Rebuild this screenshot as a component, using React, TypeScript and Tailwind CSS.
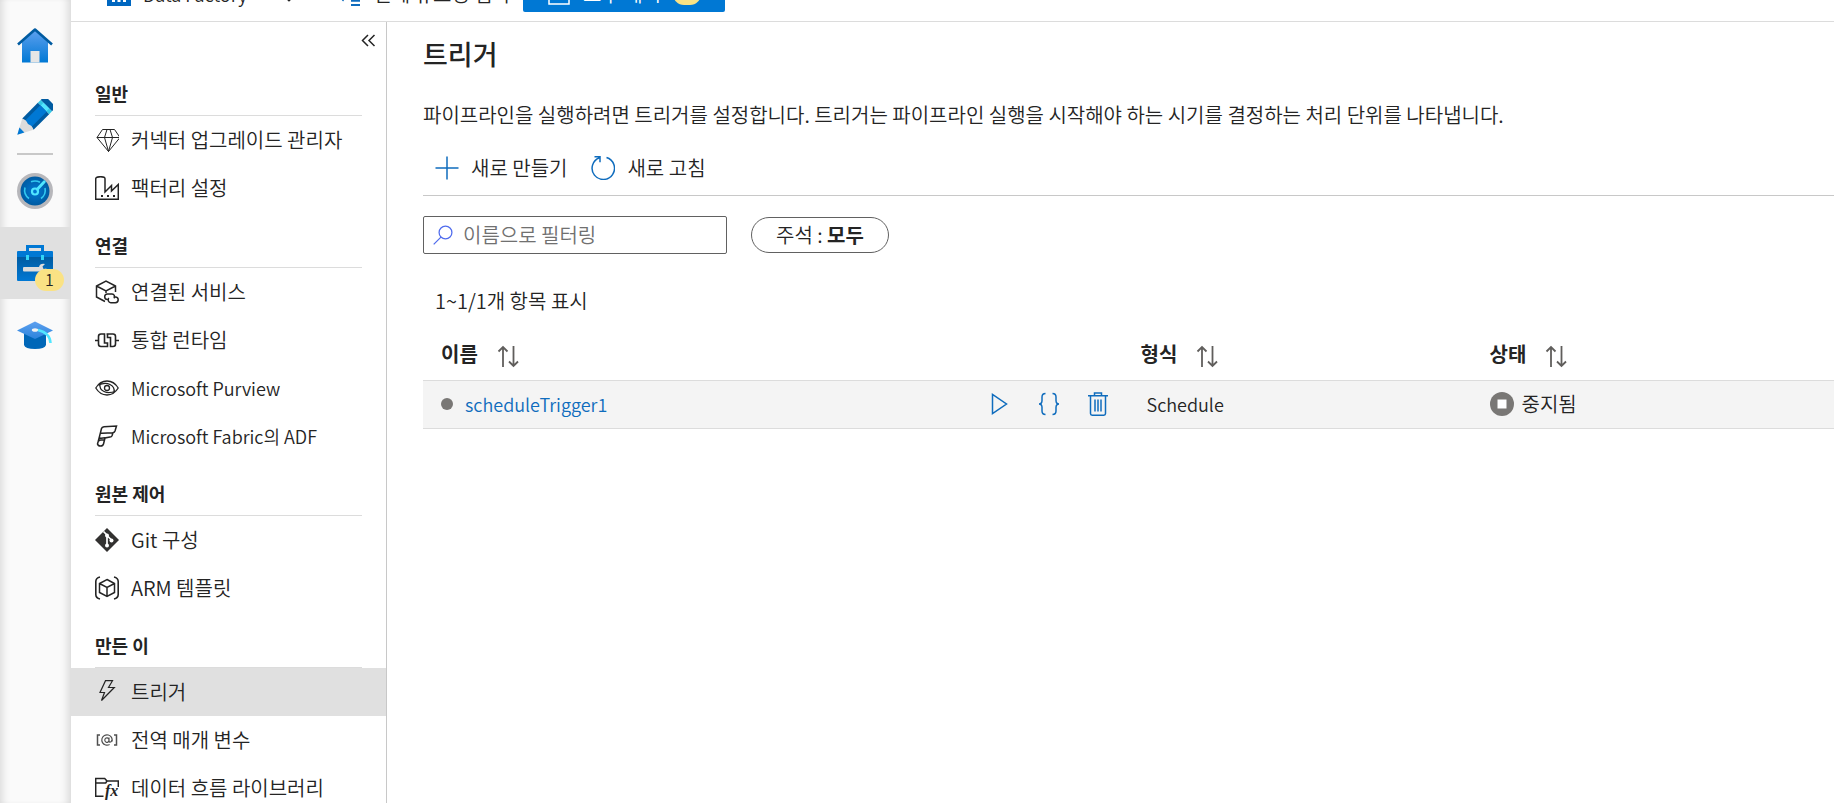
import type { ReactNode } from 'react'

type IconProps = { children: ReactNode; box?: string; className?: string }

const Svg = ({ children, box = '0 0 24 24', className = 'size-6' }: IconProps) => (
  <svg
    viewBox={box}
    className={`${className} shrink-0`}
    fill="none"
    stroke="currentColor"
    strokeWidth="1.5"
    aria-hidden="true"
  >
    {children}
  </svg>
)

/* ---------- left rail icons ---------- */

const HomeIcon = () => (
  <Svg box="0 0 36 36" className="size-9">
    <defs>
      <linearGradient id="home" x1="0" y1="0" x2="0" y2="1">
        <stop offset="0" stopColor="#5ea0ef" />
        <stop offset="1" stopColor="#0078d4" />
      </linearGradient>
    </defs>
    <path d="M18 3 31 15v20.500H5V15z" fill="url(#home)" stroke="none" />
    <path d="M13.500 24h9v11.500h-9z" fill="#e6e6e6" stroke="none" />
    <path d="m1 17.500 17-15 17 15" stroke="#005ba1" strokeWidth="2.600" strokeLinejoin="round" />
  </Svg>
)

const PencilIcon = () => (
  <Svg box="0 0 36 36" className="size-9">
    <g transform="rotate(45 18 18)" stroke="none">
      <path d="M10 2V0q0-4 4-4h8q4 0 4 4v2z" fill="#005ba1" />
      <path d="M10 2h16v4H10z" fill="#32c8e6" />
      <path d="M14 2h8v4h-8z" fill="#50e6ff" />
      <path d="M10 6h16v22H10z" fill="#005ba1" />
      <path d="M13.500 6h9v22h-9z" fill="#0078d4" />
      <path d="M10 28q4-2 8 0 4-2 8 0l-8 15z" fill="#dcdcdc" />
      <path d="M14.500 36.500h7L18 43z" fill="#0078d4" />
    </g>
  </Svg>
)

const GaugeIcon = () => (
  <Svg box="0 0 36 36" className="size-9">
    <defs>
      <radialGradient id="gauge">
        <stop offset="0" stopColor="#0078d4" />
        <stop offset="1" stopColor="#005ba1" />
      </radialGradient>
    </defs>
    <circle cx="18" cy="18" r="18" fill="#b7b7bb" stroke="none" />
    <circle cx="18" cy="18" r="14.500" fill="url(#gauge)" stroke="none" />
    <path d="M12 25.500a10.500 10.500 0 0 1-4-11M14 8.800a10.500 10.500 0 0 1 9 .5M28 15a10.500 10.500 0 0 1-4 10.500" stroke="#32c8f0" strokeWidth="1.600" />
    <circle cx="18" cy="18.500" r="3" stroke="#50e6ff" strokeWidth="2.200" />
    <path d="m20.300 16.200 7-7.500" stroke="#50e6ff" strokeWidth="2.800" strokeLinecap="round" />
  </Svg>
)

const ToolboxIcon = () => (
  <Svg box="0 0 36 36" className="size-9">
    <defs>
      <linearGradient id="toolbox" x1="0" y1="0" x2="0" y2="1">
        <stop offset="0" stopColor="#005ba1" />
        <stop offset="1" stopColor="#0078d4" />
      </linearGradient>
    </defs>
    <path d="M10.500 7V1.500h15V7" stroke="#0078d4" strokeWidth="3" />
    <path d="M0 7q0-1 1-1h34q1 0 1 1v5H0z" fill="#0078d4" stroke="none" />
    <path d="M0 12h36v23q0 1-1 1H1q-1 0-1-1z" fill="url(#toolbox)" stroke="none" />
    <path d="M10.500 10v5M25.500 10v5" stroke="#32d4f5" strokeWidth="3" />
    <path d="M7 22h15q1-4 6-3l-2.500 2.500 1 2.500 3-.5q-1 3-4 3H7q-1 0-1-1v-2.500q0-1 1-1z" fill="#dcdcdc" stroke="none" />
  </Svg>
)

const LearnIcon = () => (
  <Svg box="0 0 36 36" className="size-9">
    <defs>
      <linearGradient id="learn" x1="0" y1="0" x2="0" y2="1">
        <stop offset="0" stopColor="#5ea0ef" />
        <stop offset="1" stopColor="#2b84dc" />
      </linearGradient>
    </defs>
    <path d="M7 16h22v12q-1 4-11 4T7 28z" fill="#0067b8" stroke="none" />
    <path d="m0 13.500 18-9 18 9-18 8.500z" fill="url(#learn)" stroke="none" />
    <ellipse cx="18" cy="13" rx="3.200" ry="1.800" fill="#f2f2f2" stroke="none" />
    <path d="M21 13q12 3 12.500 13" stroke="#50e6ff" strokeWidth="2.600" />
  </Svg>
)

const rail = [
  { name: '홈', icon: <HomeIcon /> },
  { name: '작성자', icon: <PencilIcon />, divider: true },
  { name: '모니터', icon: <GaugeIcon /> },
  { name: '관리', icon: <ToolboxIcon />, badge: 1 },
  { name: '학습 센터', icon: <LearnIcon /> },
]

/* ---------- management menu ---------- */

const menu = [
  {
    title: '일반',
    items: [
      {
        label: '커넥터 업그레이드 관리자',
        icon: (
          <Svg>
            <path strokeWidth="1" d="M7.500 1.500h12L25 9.500 13.500 23.500 2 9.500zM2 9.500h23M12 1.500 9.500 9.500l4 14 4-14L15 1.500" />
          </Svg>
        ),
      },
      {
        label: '팩터리 설정',
        icon: (
          <Svg>
            <path d="M.7 23.300V3Q.7.700 5.500.700T10 3v13l6.500-6.500V15l6.800-6.500v14.800z" />
            <path d="M6 20h2M12 20h2M18 20h2" strokeWidth="2" />
          </Svg>
        ),
      },
    ],
  },
  {
    title: '연결',
    items: [
      {
        label: '연결된 서비스',
        icon: (
          <Svg>
            <path d="M10 21.500 1.500 17V6L11 1l9.500 5v6M1.500 6l9.500 5 9.500-5M11 11v2" />
            <path d="M14 19.500h-1.500a2.800 2.800 0 0 1 0-5.600H17a2.800 2.800 0 0 1 2 4.500M18.500 16.900h1.800a2.900 2.900 0 0 1 0 5.800h-4.500a2.900 2.900 0 0 1-2-4.700" />
          </Svg>
        ),
      },
      {
        label: '통합 런타임',
        icon: (
          <Svg>
            <path
              strokeWidth="1.600"
              d="M0 12.500h3.500M20.500 12.500H24M9.500 6H6Q3.500 6 3.500 8.500v7.500Q3.500 18.500 6 18.500h6.500V15h-3V6zM11.500 6H18q2.500 0 2.500 2.500v7.500q0 2.500-2.500 2.500h-2.500v-9h-3V6"
            />
          </Svg>
        ),
      },
      {
        label: 'Microsoft Purview',
        latin: true,
        icon: (
          <Svg>
            <path
              strokeWidth="1.300"
              d="M.8 12Q5 5 12 5t11.200 7Q19 19 12 19T.8 12zM3.500 9Q10 6 15 8.500T19 16M20.500 15Q14 18 9 15.500T5 8"
            />
            <circle cx="12" cy="12" r="2.500" strokeWidth="1.300" />
          </Svg>
        ),
      },
      {
        label: 'Microsoft Fabric의 ADF',
        latin: true,
        icon: (
          <Svg>
            <path d="M6.500 4.500q.5-1.500 2.500-1.800L21.500 2 20 7q-.5 1.500-2 1.700l-1 3q-.5 1.200-2 1.400l-5 .9-1.500 6q-.5 2-3 2t-3-2l2-7.500zM5.500 8.500Q5 9.500 7 9.200L18 8.700M4.500 13q0 1.500 1.500 1.300l4-.5M2.800 18q1-2 3-2h3" />
          </Svg>
        ),
      },
    ],
  },
  {
    title: '원본 제어',
    items: [
      {
        label: 'Git 구성',
        icon: (
          <Svg>
            <path d="M12 0 24 12 12 24 0 12z" fill="#323130" stroke="none" />
            <path d="m8.500 3.500 3.500 3.500v10.500M12 7.500l4.500 4.500" stroke="#fff" strokeWidth="1.700" />
            <g fill="#fff" stroke="none">
              <circle cx="12" cy="7.500" r="2" />
              <circle cx="12" cy="17.500" r="2" />
              <circle cx="16.500" cy="12.500" r="2" />
            </g>
          </Svg>
        ),
      },
      {
        label: 'ARM 템플릿',
        icon: (
          <Svg>
            <path d="M5 1Q.8 2 .8 5.500v13Q.8 22 5 23M19 1q4.200 1 4.200 4.500v13Q23.200 22 19 23" strokeWidth="1.600" />
            <path d="m12 3.500 7.500 4v9L12 20.500l-7.500-4v-9zM4.500 7.500l7.500 4 7.500-4M12 11.500v9" />
          </Svg>
        ),
      },
    ],
  },
  {
    title: '만든 이',
    items: [
      {
        label: '트리거',
        active: true,
        icon: (
          <Svg>
            <path strokeWidth="1.200" d="M10.500.700h7L13.500 7.500h5.800L6.500 20.500 9.500 12.500H5z" />
          </Svg>
        ),
      },
      {
        label: '전역 매개 변수',
        icon: (
          <Svg className="size-6 text-[#505050]">
            <path d="M5 7H2.500v10H5M19 7h2.500v10H19" />
            <circle cx="12" cy="12" r="5.200" strokeWidth="1.200" strokeDasharray="28 5" transform="rotate(60 12 12)" />
            <path d="M14 9.500v3.500q.5 1.800 2 .8 1-1 1-2M14 12a2.100 2.300 0 1 1-.1-.6" strokeWidth="1.200" />
          </Svg>
        ),
      },
      {
        label: '데이터 흐름 라이브러리',
        icon: (
          <Svg>
            <path d="M8.500 20.300H.7V2.500h9L12 5h11.300v6M.7 7h10L12 5" />
            <text x="10" y="20" fontSize="16" fontStyle="italic" fontWeight="bold" fontFamily="Liberation Serif, serif" fill="currentColor" stroke="none">
              fx
            </text>
          </Svg>
        ),
      },
    ],
  },
]

const SortIcon = () => (
  <Svg className="mt-1 size-6 text-[#605e5c]">
    <path strokeWidth="1.800" d="M7 23V3M2.500 7.500 7 3l4.500 4.500M17.500 2v20M13 17.500l4.500 4.500 4.500-4.500" />
  </Svg>
)

const columns = [
  { name: '이름', className: 'w-1/2 pl-[18px]' },
  { name: '형식', className: 'w-[349px] pl-3' },
  { name: '상태', className: 'pl-3' },
]

const TopBar = () => (
  <header className="flex h-[22px] shrink-0 items-end overflow-hidden border-b border-[#dcdcdc] pb-[9px] pl-9">
    <div className="flex h-9 items-center whitespace-nowrap">
      <Svg>
        <path d="M0 0h24v24H0z" fill="#0067c0" stroke="none" />
        <path d="M5 20v-9h3v9zM10.500 20v-6h3v6zM16 20V9h3v11z" fill="#fff" stroke="none" />
      </Svg>
      <span className="ml-3 text-[18px]">Data Factory</span>
      <Svg className="ml-8 size-5">
        <path strokeWidth="2" d="m4 12 8 8 8-8" />
      </Svg>
      <button type="button" className="ml-[38px] flex items-center gap-3">
        <Svg className="size-6 text-[#0f6cbd]">
          <path strokeWidth="1.800" d="m2 14 4 4L13 8M14 14.500h9M14 18.800h9M14 23h9" />
        </Svg>
        전체 유효성 검사
      </button>
      <button type="button" className="ml-3 flex h-9 items-center gap-3 rounded-xs bg-[#0078d4] px-6 text-white">
        <Svg>
          <path d="M2 2h20v20H2zM6 2v6h12V2" />
        </Svg>
        모두 게시
        <span className="h-[22px] w-7 rounded-full bg-[#fae284] text-center text-[16px] leading-4 text-[#242424]">1</span>
      </button>
    </div>
  </header>
)

const Rail = () => (
  <nav className="w-[71px] shrink-0 border-r border-[#e0e0e0] bg-[#fafafa] pt-[9px] shadow-[inset_8px_0_8px_-6px_#00000024,inset_-8px_0_8px_-6px_#00000024]">
    {rail.map(({ name, icon, badge, divider }) => (
      <div key={name}>
        <button
          type="button"
          aria-label={name}
          className={`relative flex h-[72px] w-full items-center justify-center ${badge ? 'bg-[#e0e0e0]' : ''}`}
        >
          {icon}
          {badge && (
            <span className="absolute right-[6px] bottom-2 h-[22px] w-[29px] rounded-full bg-[#fae284] text-center text-[16px] leading-5">
              {badge}
            </span>
          )}
        </button>
        {divider && <hr className="mx-auto w-9 border-t-2 border-[#c8c8c8]" />}
      </div>
    ))}
  </nav>
)

const SideMenu = () => (
  <aside className="w-[316px] shrink-0 border-r border-[#c8c8c8]">
    <div className="flex h-[38px] items-center justify-end pr-[10px]">
      <button type="button" aria-label="축소">
        <Svg box="0 0 16 16" className="size-4">
          <path d="M8 2 2.500 7.500 8 13M14.500 2 9 7.500l5.500 5.500" />
        </Svg>
      </button>
    </div>
    {menu.map((group) => (
      <section key={group.title}>
        <h2 className="mx-6 flex h-14 items-end border-b border-[#dcdcdc] pb-2 text-[18px] leading-[27px] font-bold">
          {group.title}
        </h2>
        {group.items.map((item) => (
          <a
            key={item.label}
            href="#"
            className={`flex h-12 items-center gap-3 pl-6 ${'active' in item ? 'bg-[#e0e0e0]' : ''} ${'latin' in item ? 'text-[18px]' : ''}`}
          >
            {item.icon}
            {item.label}
          </a>
        ))}
      </section>
    ))}
  </aside>
)

const Triggers = () => (
  <main className="min-w-0 flex-1 pt-[14px] pl-9">
    <h1 className="text-[27px] leading-9 font-medium">트리거</h1>
    <p className="mt-7">
      파이프라인을 실행하려면 트리거를 설정합니다. 트리거는 파이프라인 실행을 시작해야 하는 시기를 결정하는 처리 단위를
      나타냅니다.
    </p>

    <div className="mt-[11px] flex h-[55px] items-center gap-6 border-b border-[#c8c8c8] pl-3">
      <button type="button" className="flex items-center gap-3">
        <Svg className="size-6 text-[#0f6cbd]">
          <path d="M12 .5v23M.5 12h23" />
        </Svg>
        새로 만들기
      </button>
      <button type="button" className="flex items-center gap-3">
        <Svg className="size-6 text-[#0f6cbd]">
          <path d="M15.500 1.500A11.200 11.200 0 1 1 8.500 1.700M3.500.7h5.500v5.500" />
        </Svg>
        새로 고침
      </button>
    </div>

    <div className="mt-5 flex items-center gap-6">
      <label className="flex h-[38px] w-[304px] items-center gap-2.5 rounded-xs border border-[#616161] pl-[9px]">
        <Svg className="size-5 text-[#4f6bed]">
          <circle cx="15" cy="9" r="7.700" />
          <path d="M9.500 14.500.800 23.200" />
        </Svg>
        <input
          type="text"
          aria-label="이름으로 필터링"
          placeholder="이름으로 필터링"
          className="w-full min-w-0 outline-none placeholder:text-[#707070]"
        />
      </label>
      <button type="button" className="h-9 rounded-full border border-[#616161] px-6">
        주석 : <b className="font-bold">모두</b>
      </button>
    </div>

    <p className="mt-8 pl-3">1~1/1개 항목 표시</p>

    <table className="mt-3 w-full table-fixed border-collapse text-left">
      <thead>
        <tr className="h-[52px]">
          {columns.map((col) => (
            <th key={col.name} className={`p-0 font-bold ${col.className}`}>
              <button type="button" className="flex items-center gap-[18px]">
                {col.name}
                <SortIcon />
              </button>
            </th>
          ))}
        </tr>
      </thead>
      <tbody>
        <tr className="h-12 border-y border-[#dcdcdc] bg-[#f4f4f4]">
          <td className="pl-[18px]">
            <div className="flex items-center">
              <span className="size-3 rounded-full bg-[#797775]" />
              <a href="#" className="ml-3 text-[18px] text-[#0f6cbd]">
                scheduleTrigger1
              </a>
              <div className="ml-auto flex gap-[25px] pr-[19px] text-[#0f6cbd]">
                <button type="button" aria-label="시작">
                  <Svg>
                    <path d="M4.500 2.500v19L18.500 12z" />
                  </Svg>
                </button>
                <button type="button" aria-label="코드">
                  <Svg>
                    <path d="M8.500 1.500Q5 1.500 5 5v3.500Q5 12 2 12q3 0 3 3.500V19q0 3.500 3.500 3.500M15.500 1.500Q19 1.500 19 5v3.500q0 3.500 3 3.500-3 0-3 3.500V19q0 3.500-3.500 3.500" />
                  </Svg>
                </button>
                <button type="button" aria-label="삭제">
                  <Svg>
                    <path d="M2 3.800h20M8.500 3.500V1h7v2.500M4.500 4v17.500q0 1.700 1.700 1.700h11.600q1.700 0 1.700-1.700V4M9 7.500v12M12 7.500v12M15 7.500v12" />
                  </Svg>
                </button>
              </div>
            </div>
          </td>
          <td className="pl-[18px] text-[18px]">Schedule</td>
          <td className="pl-3">
            <div className="flex items-center gap-2">
              <Svg>
                <circle cx="12" cy="12" r="12" fill="#797775" stroke="none" />
                <path d="M7.500 7.500h9v9h-9z" fill="#fff" stroke="none" />
              </Svg>
              중지됨
            </div>
          </td>
        </tr>
      </tbody>
    </table>
  </main>
)

export default function App() {
  return (
    <div className="flex h-screen overflow-hidden bg-white font-['Noto_Sans_CJK_KR',sans-serif] text-[20px] leading-[30px] font-[350] text-[#242424]">
      <Rail />
      <div className="flex min-w-0 flex-1 flex-col">
        <TopBar />
        <div className="flex min-h-0 flex-1">
          <SideMenu />
          <Triggers />
        </div>
      </div>
    </div>
  )
}
